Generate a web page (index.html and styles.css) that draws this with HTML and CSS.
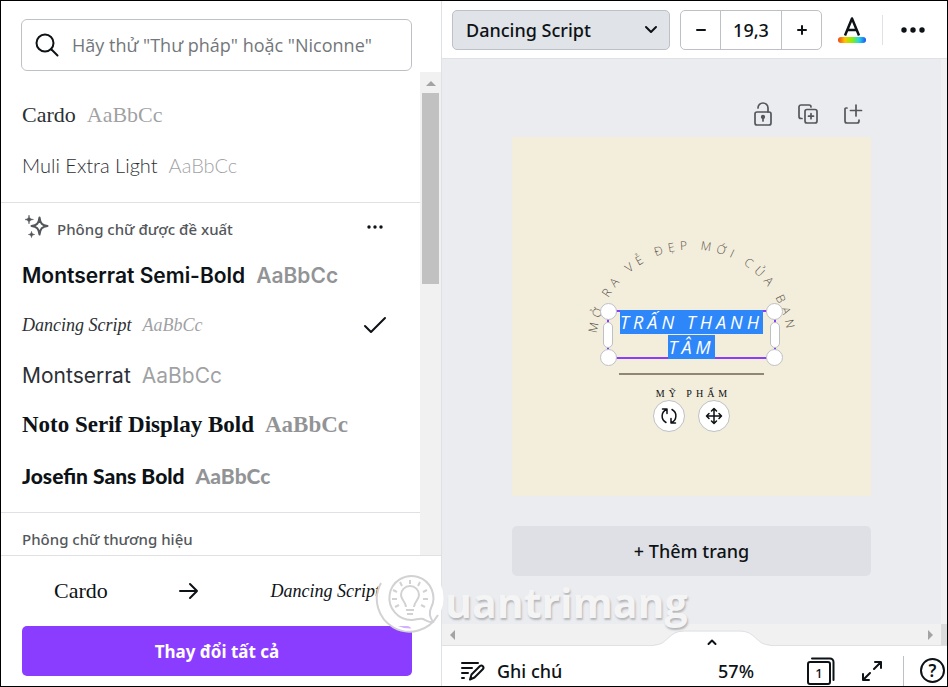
FILE: index.html
```html
<!DOCTYPE html>
<html lang="vi">
<head>
    <meta charset="UTF-8">
    <meta name="viewport" content="width=device-width, initial-scale=1.0">
    <title>Phông chữ</title>
    <link rel="stylesheet" href="styles.css">
</head>
<body>
    <div class="app">
        <!-- Font panel -->
        <aside class="panel">
            <div class="search-wrap">
                <label class="search" aria-label="Tìm phông chữ">
                    <svg width="24" height="24" viewBox="0 0 24 24" fill="none" stroke="#0d1216" stroke-width="2" stroke-linecap="round">
                        <circle cx="10" cy="10" r="8.5"/>
                        <path d="M16.5 16.5l6 6"/>
                    </svg>
                    <input type="search" placeholder='Hãy thử "Thư pháp" hoặc "Niconne"'>
                </label>
            </div>

            <div class="list-area">
                <div class="font-list">
                    <section class="group">
                        <button class="font-row cardo">Cardo <span class="sample">AaBbCc</span></button>
                        <button class="font-row muli">Muli Extra Light <span class="sample">AaBbCc</span></button>
                    </section>
                    <section class="group">
                        <div class="group-head">
                            <svg width="24" height="24" viewBox="0 0 24 24" fill="#53575b">
                                <path d="M14.500 2.500C15.300 8.500 17 10.200 22.500 11C17 11.800 15.300 13.500 14.500 19.500C13.700 13.500 12 11.800 6.500 11C12 10.200 13.700 8.500 14.500 2.500Z" fill="none" stroke="#53575b" stroke-width="2" stroke-linejoin="round"/>
                                <path d="M4 0C4.400 3.300 5.200 4.100 8.500 4.500C5.200 4.900 4.400 5.700 4 9C3.600 5.700 2.800 4.900 -0.500 4.500C2.800 4.100 3.600 3.300 4 0Z" stroke="#53575b" stroke-width="0.500"/>
                                <path d="M6.500 16.500C6.800 18.500 7.500 19.200 9.500 19.500C7.500 19.800 6.800 20.500 6.500 22.500C6.200 20.500 5.500 19.800 3.500 19.500C5.500 19.200 6.200 18.500 6.500 16.500Z" stroke="#53575b" stroke-width="0.700"/>
                            </svg>
                            <h3>Phông chữ được đề xuất</h3>
                            <button class="more" aria-label="Thêm">
                                <svg width="16" height="4" viewBox="0 0 16 4" fill="#0d1216"><circle cx="2" cy="2" r="1.700"/><circle cx="8" cy="2" r="1.700"/><circle cx="14" cy="2" r="1.700"/></svg>
                            </button>
                        </div>
                        <button class="font-row montserrat-semi">Montserrat Semi-Bold <span class="sample">AaBbCc</span></button>
                        <button class="font-row dancing">Dancing Script <span class="sample">AaBbCc</span>
                            <svg class="check" width="24" height="18" viewBox="0 0 24 18" fill="none" stroke="#0d1216" stroke-width="2" stroke-linecap="round" stroke-linejoin="round"><path d="M2 10l6 6L22 2"/></svg>
                        </button>
                        <button class="font-row montserrat">Montserrat <span class="sample">AaBbCc</span></button>
                        <button class="font-row noto-display">Noto Serif Display Bold <span class="sample">AaBbCc</span></button>
                        <button class="font-row josefin">Josefin Sans Bold <span class="sample">AaBbCc</span></button>
                    </section>
                    <section class="group">
                        <div class="group-head brand">
                            <h3>Phông chữ thương hiệu</h3>
                        </div>
                    </section>
                </div>
                <div class="scroll-y">
                    <svg width="10" height="5" viewBox="0 0 10 5" fill="#a3a3a3"><path d="M0 5L5 0l5 5z"/></svg>
                    <div class="thumb"></div>
                </div>
            </div>

            <div class="change">
                <div class="change-row">
                    <span class="from">Cardo</span>
                    <svg width="20" height="18" viewBox="0 0 20 18" fill="none" stroke="#0d1216" stroke-width="2" stroke-linecap="round" stroke-linejoin="round"><path d="M1 9h17M11 2l7 7-7 7"/></svg>
                    <span class="to">Dancing Script</span>
                </div>
                <button class="btn">Thay đổi tất cả</button>
            </div>
        </aside>

        <!-- Editor -->
        <main class="editor">
            <div class="toolbar">
                <select class="font-select" aria-label="Phông chữ">
                    <option>Dancing Script</option>
                </select>
                <div class="stepper">
                    <button aria-label="Giảm cỡ chữ"><svg width="12" height="12" viewBox="0 0 12 12" stroke="#0d1216" stroke-width="2" stroke-linecap="round"><path d="M2 6h8"/></svg></button>
                    <input type="text" value="19,3" aria-label="Cỡ chữ">
                    <button aria-label="Tăng cỡ chữ"><svg width="12" height="12" viewBox="0 0 12 12" stroke="#0d1216" stroke-width="2" stroke-linecap="round"><path d="M2 6h8M6 2v8"/></svg></button>
                </div>
                <button class="color" aria-label="Màu chữ">
                    <svg width="18" height="19" viewBox="0 0 18 19" fill="none" stroke="#0d1216" stroke-width="2.500" stroke-linejoin="round"><path d="M2 18.500L9 1.500l7 17M4.500 13h9"/></svg>
                    <span class="rainbow"></span>
                </button>
                <span class="divider"></span>
                <button class="dots" aria-label="Thêm tùy chọn">
                    <svg width="24" height="6" viewBox="0 0 24 6" fill="#0d1216"><circle cx="3" cy="3" r="2.700"/><circle cx="12" cy="3" r="2.700"/><circle cx="21" cy="3" r="2.700"/></svg>
                </button>
            </div>

            <div class="workspace">
                <div class="stage">
                    <div class="page-tools">
                        <button aria-label="Khóa trang">
                            <svg width="20" height="24" viewBox="0 0 20 24" fill="none" stroke="#53575b" stroke-width="1.700" stroke-linecap="round" stroke-linejoin="round">
                                <rect x="2" y="10" width="16" height="13" rx="2"/><path d="M5 6a5 5 0 0 1 10 0v4M10 16v3"/><circle cx="10" cy="15" r="1.300" fill="#53575b"/>
                            </svg>
                        </button>
                        <button aria-label="Nhân đôi trang">
                            <svg width="20" height="20" viewBox="0 0 20 20" fill="none" stroke="#53575b" stroke-width="1.700" stroke-linecap="round" stroke-linejoin="round">
                                <path d="M4 14.500H3a2 2 0 0 1-2-2V3a2 2 0 0 1 2-2h8a2 2 0 0 1 2 2"/><rect x="7" y="5.500" width="12" height="13.500" rx="2"/><path d="M10.500 12.200h5M13 9.700v5"/>
                            </svg>
                        </button>
                        <button aria-label="Thêm trang mới">
                            <svg width="20" height="20" viewBox="0 0 20 20" fill="none" stroke="#53575b" stroke-width="1.700" stroke-linecap="round" stroke-linejoin="round">
                                <path d="M4 4H3a1 1 0 0 0-1 1v12a2 2 0 0 0 2 2h10a2 2 0 0 0 2-2v-1M13 1v11M7.500 6.500h11"/>
                            </svg>
                        </button>
                    </div>

                    <div class="artboard">
                        <svg class="arc" viewBox="0 0 359 359">
                            <path id="arcPath" d="M86 228A96 96 0 1 1 274 228" fill="none"/>
                            <text class="arc-text" text-anchor="middle"><textPath href="#arcPath" startOffset="50%">MỞ RA VẺ ĐẸP MỚI CỦA BẠN</textPath></text>
                            <path d="M107 237h145" stroke="#8f8678" stroke-width="2"/>
                        </svg>
                        <div class="text-box">
                            <p><mark>TRẤN THANH TÂM</mark></p>
                            <span class="handle tl"></span>
                            <span class="handle tr"></span>
                            <span class="handle bl"></span>
                            <span class="handle br"></span>
                            <span class="handle side left"></span>
                            <span class="handle side right"></span>
                        </div>
                        <p class="caption">MỸ PHẨM</p>
                        <div class="art-actions">
                            <button aria-label="Xoay">
                                <svg width="18" height="18" viewBox="0 0 18 18" fill="none" stroke="#0d1216" stroke-width="1.500" stroke-linecap="round" stroke-linejoin="round"><path d="M6 15.500C0.500 12.500 1 5 6.500 2.500M2.500 2h4.500v4.500M12 2.500c5.500 3 5 10.500-0.500 13M15.500 16H11v-4.500"/></svg>
                            </button>
                            <button aria-label="Di chuyển">
                                <svg width="18" height="18" viewBox="0 0 18 18" fill="none" stroke="#0d1216" stroke-width="1.500" stroke-linecap="round" stroke-linejoin="round"><path d="M9 2v14M2 9h14M6.500 4L9 1.500 11.500 4M6.500 14L9 16.500l2.500-2.500M4 6.500L1.500 9 4 11.500M14 6.500L16.500 9 14 11.500"/></svg>
                            </button>
                        </div>
                    </div>

                    <button class="add-page">+ Thêm trang</button>
                </div>
            </div>

            <div class="scroll-x">
                <svg width="5" height="10" viewBox="0 0 5 10" fill="#a3a3a3"><path d="M5 0L0 5l5 5z"/></svg>
                <svg width="5" height="10" viewBox="0 0 5 10" fill="#a3a3a3"><path d="M0 0l5 5-5 5z"/></svg>
                <span class="corner"></span>
                <button class="drawer" aria-label="Hiện các trang">
                    <svg width="116" height="16" viewBox="0 0 116 16" fill="none">
                        <path d="M0 15.500C14 15.500 14 1.500 30 1.500H86C102 1.500 102 15.500 116 15.500V16H0z" fill="#fff"/>
                        <path d="M0 15C14 15 14 1 30 1H86C102 1 102 15 116 15" stroke="#dfe1e5"/>
                        <path d="M54.500 14l3.500-3.500 3.500 3.500" stroke="#0d1216" stroke-width="2" stroke-linecap="round" stroke-linejoin="round"/>
                    </svg>
                </button>
            </div>

            <div class="statusbar">
                <button class="notes">
                    <svg width="24" height="20" viewBox="0 0 24 20" fill="none" stroke="#0d1216" stroke-width="2" stroke-linecap="round" stroke-linejoin="round"><path d="M1 2h16M1 7h10M1 12h6M1 17h2M9 18.500l1.500-5L19 5c2-1.500 4.500 1 3 3l-8.500 8.500z"/></svg>
                    Ghi chú
                </button>
                <button class="zoom-level">57%</button>
                <button class="pages" aria-label="Trang">
                    <svg width="28" height="28" viewBox="0 0 28 28" fill="none" stroke="#0d1216" stroke-width="2" stroke-linecap="round"><rect x="1" y="5" width="22" height="22" rx="2"/><path d="M5 1.500h18a3.500 3.500 0 0 1 3.500 3.500v18"/></svg>
                    <span>1</span>
                </button>
                <button class="expand" aria-label="Toàn màn hình">
                    <svg width="20" height="20" viewBox="0 0 20 20" fill="none" stroke="#0d1216" stroke-width="2" stroke-linecap="round" stroke-linejoin="round"><path d="M12 8l7-7M13 1h6v6M8 12l-7 7M1 13v6h6"/></svg>
                </button>
                <span class="divider"></span>
                <button class="help" aria-label="Trợ giúp">?</button>
            </div>
        </main>
    </div>

    <div class="watermark">
        <svg width="70" height="70" viewBox="0 0 70 70" fill="none" stroke="#d2d2d4">
            <circle cx="35" cy="35" r="32" fill="#fff" fill-opacity="0.600" stroke="#fff" stroke-width="3"/>
            <path d="M6 20a32.500 32.500 0 1 0 57 32" stroke-width="2"/>
            <path d="M56 45a22 22 0 1 0-19 12c4 0 7-2 11-1 4 2 7 4 10 3-2-3-5-8-2-14z" fill="#fff" fill-opacity="0.400" stroke-width="2"/>
            <path d="M31 44c0-5-5-7-5-12a9 9 0 0 1 18 0c0 5-5 7-5 12M31 47h8M32 51h6" stroke-width="2"/>
            <path d="M35 17v4M25 19l2 4M45 19l-2 4M18 27l4 2M52 27l-4 2M17 36h5M48 36h5M20 44l4-2M50 44l-4-2" stroke-width="2"/>
        </svg>
        <span>uantrimang</span>
    </div>
</body>
</html>
```

FILE: styles.css
```css
/* General Reset */
* {
    margin: 0;
    padding: 0;
    box-sizing: border-box;
}

body {
    font-family: 'Noto Sans', 'Open Sans', sans-serif;
    font-size: 16px;
    color: #0d1216;
    background: #fff;
}

button,
input,
select {
    font: inherit;
    color: inherit;
    background: none;
    border: none;
    outline: none;
}

button {
    cursor: pointer;
}

svg {
    display: block;
    flex-shrink: 0;
}

.app {
    display: flex;
    height: 100vh;
    border: 1px solid #000;
    overflow: hidden;
}

/* Font Panel */
.panel {
    display: flex;
    flex-direction: column;
    flex: 0 0 441px;
    border-right: 1px solid #dfe1e5;
}

.search-wrap {
    padding: 18px 29px 1px 20px;
}

.search {
    display: flex;
    align-items: center;
    gap: 13px;
    height: 52px;
    padding: 0 13px;
    border: 1px solid #bdc1c6;
    border-radius: 6px;
}

.search input {
    flex: 1;
    min-width: 0;
    font-family: 'Open Sans', sans-serif;
    font-size: 18px;
}

.search input::placeholder {
    color: #73777b;
}

.list-area {
    display: flex;
    flex: 1;
    min-height: 0;
}

.font-list {
    flex: 1;
    min-width: 0;
    overflow: hidden;
    padding-top: 18px;
}

.group {
    padding-bottom: 12px;
    border-bottom: 1px solid #dfe1e5;
}

.group-head {
    display: flex;
    align-items: center;
    gap: 8px;
    height: 47px;
    padding: 0 37px 0 24px;
}

.group-head h3 {
    flex: 1;
    padding-top: 5px;
    font-size: 15px;
    font-weight: 500;
    color: #53575b;
}

.group-head.brand {
    padding-left: 21px;
}

.font-row {
    display: flex;
    align-items: center;
    gap: 11px;
    width: 100%;
    height: 50px;
    padding: 0 33px 0 21px;
    font-size: 21px;
    text-align: left;
}

.sample {
    opacity: 0.45;
}

.check {
    margin-left: auto;
}

.cardo {
    font-family: 'Liberation Serif', serif;
    font-size: 22px;
    color: #2c3034;
}

.muli {
    font-family: Lato, sans-serif;
    font-weight: 300;
    font-size: 20px;
    color: #2c3034;
}

.montserrat-semi {
    font-family: Inter, sans-serif;
    font-weight: 600;
}

.dancing {
    font-family: 'Liberation Serif', serif;
    font-style: italic;
    font-size: 18px;
    color: #2c3034;
}

.montserrat {
    font-family: Inter, sans-serif;
    color: #2c3034;
}

.noto-display {
    font-family: 'Liberation Serif', serif;
    font-weight: 700;
    font-size: 23px;
}

.josefin {
    font-family: Lato, sans-serif;
    font-weight: 900;
}

/* Scrollbars */
.scroll-y {
    flex: 0 0 21px;
    padding: 9px 2px 0;
    background: #f1f1f1;
}

.scroll-y svg {
    margin: 0 auto 7px;
}

.scroll-y .thumb {
    height: 191px;
    background: #c1c1c1;
}

.scroll-x {
    position: relative;
    display: flex;
    align-items: center;
    height: 22px;
    padding-left: 8px;
    background: #f1f1f1;
    border-bottom: 1px solid #dfe1e5;
}

.scroll-x > svg + svg {
    margin-left: auto;
}

.corner {
    width: 6px;
    height: 100%;
    margin-left: 8px;
    background: #dcdcdc;
}

.drawer {
    position: absolute;
    left: 50%;
    bottom: -1px;
    margin-left: -41px;
}

/* Change All */
.change {
    padding: 10px 29px 10px 21px;
    border-top: 1px solid #dfe1e5;
}

.change-row {
    display: flex;
    align-items: center;
    justify-content: space-between;
    height: 50px;
    margin-bottom: 10px;
    padding: 0 32px;
    font-family: 'Liberation Serif', serif;
    font-size: 22px;
}

.change-row .to {
    font-size: 18px;
    font-style: italic;
}

.btn {
    width: 100%;
    height: 50px;
    font-size: 17px;
    font-weight: 700;
    color: #fff;
    background: #8b3dff;
    border-radius: 5px;
}

/* Toolbar */
.editor {
    display: flex;
    flex-direction: column;
    flex: 1;
    min-width: 0;
}

.toolbar {
    display: flex;
    align-items: center;
    height: 58px;
    padding: 0 22px 0 10px;
    border-bottom: 1px solid #dfe1e5;
}

.font-select {
    flex: 0 1 218px;
    height: 40px;
    margin-right: 10px;
    padding: 0 13px;
    font-size: 18px;
    font-weight: 500;
    border: 1px solid #bdc1c6;
    border-radius: 5px;
    appearance: none;
    background: #e0e3e7 url("data:image/svg+xml,%3Csvg xmlns='http://www.w3.org/2000/svg' width='14' height='9' fill='none' stroke='%230d1216' stroke-width='2' stroke-linecap='round' stroke-linejoin='round'%3E%3Cpath d='M2 2l5 5 5-5'/%3E%3C/svg%3E") no-repeat right 11px center;
}

.stepper {
    display: flex;
    height: 40px;
    border: 1px solid #bdc1c6;
    border-radius: 5px;
}

.stepper button {
    display: flex;
    align-items: center;
    justify-content: center;
    width: 39px;
}

.stepper input {
    width: 62px;
    font-size: 18px;
    font-weight: 500;
    text-align: center;
    border: solid #bdc1c6;
    border-width: 0 1px;
}

.color {
    display: flex;
    flex-direction: column;
    align-items: center;
    gap: 1px;
    margin: 0 16px;
}

.rainbow {
    width: 28px;
    height: 6px;
    border-radius: 3px;
    background: linear-gradient(to right, #f0431a, #ffc400, #8bf000, #1fd7e8, #2450f0);
}

.divider {
    width: 1px;
    height: 30px;
    background: #dfe1e5;
}

.dots {
    margin-left: auto;
}

/* Workspace */
.workspace {
    flex: 1;
    min-height: 0;
    padding-top: 42px;
    background: #ebecf0;
    border-right: 6px solid #f1f1f1;
}

.stage {
    width: 359px;
    margin: 0 auto;
}

.page-tools {
    display: flex;
    align-items: center;
    justify-content: flex-end;
    gap: 25px;
    height: 26px;
    margin-bottom: 10px;
    padding-right: 8px;
}

.artboard {
    position: relative;
    aspect-ratio: 1;
    margin-bottom: 30px;
    background: #f3eddb;
}

.arc {
    position: absolute;
    inset: 0;
}

.arc-text {
    font-family: 'Open Sans', sans-serif;
    font-size: 12px;
    font-weight: 300;
    letter-spacing: 5px;
    fill: #53504a;
}

.text-box {
    position: absolute;
    left: 95px;
    top: 173px;
    width: 169px;
    height: 49px;
    border: 2px solid #8b3dff;
}

.text-box p {
    margin-top: -2px;
    font-family: 'Open Sans', sans-serif;
    font-style: italic;
    font-size: 18px;
    line-height: 25px;
    letter-spacing: 4px;
    text-align: center;
}

.text-box mark {
    color: #fff;
    background: #2e87f8;
}

.handle {
    position: absolute;
    width: 17px;
    height: 17px;
    background: #fff;
    border: 1px solid #bdc1c6;
    border-radius: 9px;
}

.tl {
    left: -9px;
    top: -9px;
}

.tr {
    right: -9px;
    top: -9px;
}

.bl {
    left: -9px;
    bottom: -9px;
}

.br {
    right: -9px;
    bottom: -9px;
}

.side {
    top: 10px;
    width: 10px;
    height: 26px;
}

.left {
    left: -6px;
}

.right {
    right: -6px;
}

.caption {
    position: absolute;
    top: 249px;
    width: 100%;
    padding-left: 4px;
    font-family: 'Liberation Serif', serif;
    font-size: 10px;
    line-height: 16px;
    letter-spacing: 4px;
    text-align: center;
}

.art-actions {
    position: absolute;
    top: 263px;
    display: flex;
    justify-content: center;
    gap: 13px;
    width: 100%;
}

.art-actions button {
    display: flex;
    align-items: center;
    justify-content: center;
    width: 32px;
    height: 32px;
    background: #fff;
    border: 1px solid #bdc1c6;
    border-radius: 50%;
}

.add-page {
    width: 100%;
    height: 50px;
    font-size: 18px;
    font-weight: 500;
    background: #dfe0e5;
    border-radius: 5px;
}

/* Status Bar */
.statusbar {
    display: flex;
    align-items: center;
    height: 40px;
    padding: 9px 2px 0 19px;
    font-size: 18px;
    font-weight: 500;
}

.notes {
    display: flex;
    align-items: center;
    gap: 12px;
    margin-right: auto;
}

.pages {
    position: relative;
    margin: 0 27px 0 53px;
}

.pages span {
    position: absolute;
    left: 0;
    top: 7px;
    width: 24px;
    font-size: 13px;
    line-height: 18px;
}

.statusbar .divider {
    margin: 0 16px 0 21px;
    background: #bdc1c6;
}

.help {
    width: 25px;
    height: 25px;
    font-size: 17px;
    font-weight: 600;
    line-height: 20px;
    border: 2px solid #0d1216;
    border-radius: 50%;
}

/* Watermark */
.watermark {
    position: absolute;
    left: 375px;
    top: 563px;
    display: flex;
    align-items: center;
    height: 70px;
    font-family: 'Open Sans', sans-serif;
    font-size: 41px;
    font-weight: 700;
    color: #f4f4f5;
    text-shadow: 1px 2px 2px #b4b5b9;
    pointer-events: none;
}

.watermark span {
    padding-top: 8px;
}
```
